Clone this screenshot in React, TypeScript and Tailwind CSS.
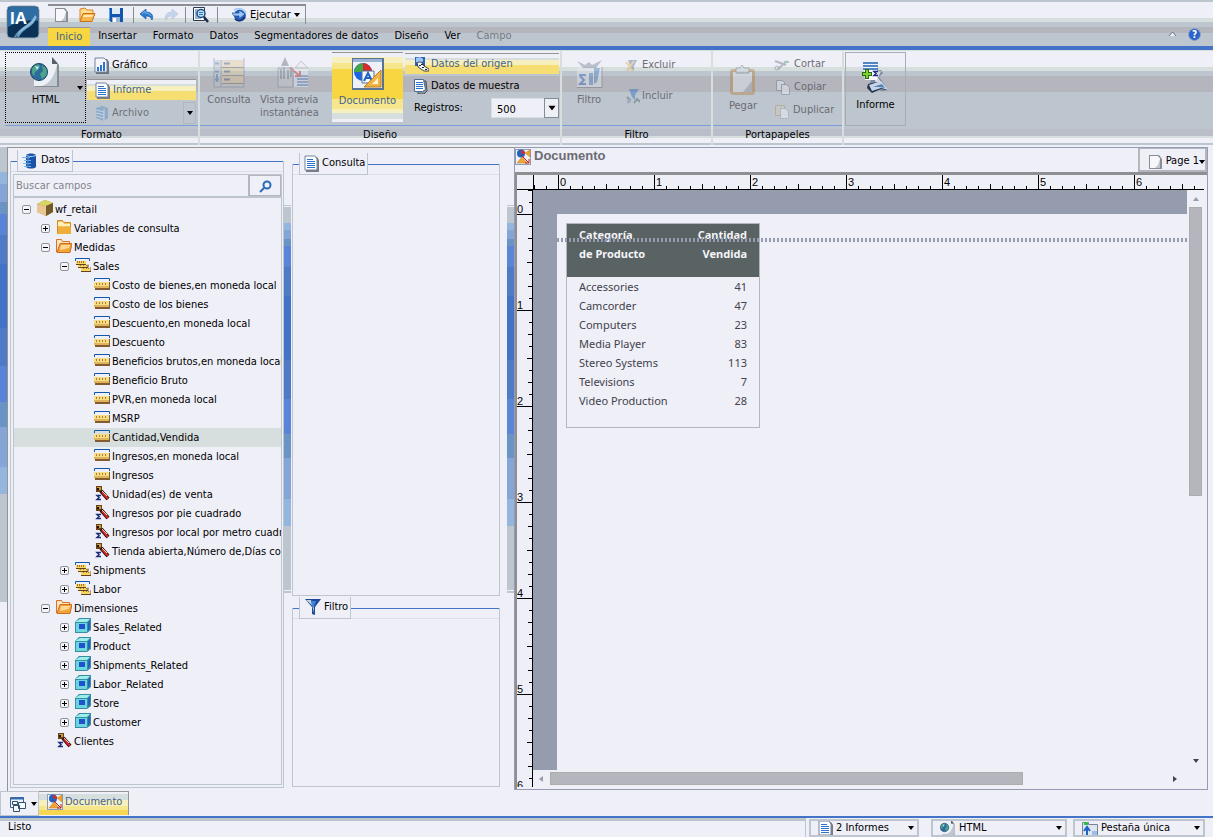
import type { ReactNode } from 'react';

/* ---------- small shared drawings ---------- */

function Arrow({ className = '' }: { className?: string }) {
  return (
    <svg width="6" height="4" viewBox="0 0 6 4" className={className} fill="currentColor" aria-hidden="true">
      <path d="M0 0h6L3 4z" />
    </svg>
  );
}

function Icon({ w = 16, h = 16, box, faded = false, children }: { w?: number; h?: number; box?: string; faded?: boolean; children: ReactNode }) {
  return (
    <svg width={w} height={h} viewBox={box ?? `0 0 ${w} ${h}`} fill="none" aria-hidden="true" className={faded ? 'shrink-0 opacity-40' : 'shrink-0'}>
      {children}
    </svg>
  );
}

const PageIcon = () => (
  <Icon>
    <path d="M2 1h10l3 4v10H2z" fill="#8c8c8c" />
    <path d="M2.5 1.5h8.5l2.5 3v10h-11z" fill="#f7f7fb" stroke="#8c8c94" />
    <path d="M13 5v9H8l3-3z" fill="#bdc6ce" />
  </Icon>
);

const OpenIcon = () => (
  <Icon w={17}>
    <path d="M1 14V2l5-1 2 2h6v4" fill="#ffdc8c" stroke="#d6842b" />
    <path d="M1 14.500l3-8h12l-3 8z" fill="#f7b54a" stroke="#c67318" />
    <path d="M5 8h9l-1 2H4z" fill="#ffe7b5" />
  </Icon>
);

const SaveIcon = () => (
  <Icon>
    <path d="M1 1h14v14H3l-2-2z" fill="#1057ad" />
    <path d="M4 1h8v6H4z" fill="#dfe9f7" />
    <path d="M4 10h8v5H4z" fill="#9cb5d6" />
    <path d="M5 11h3v4H5z" fill="#fff" />
    <path d="M1.500 1.500v11" stroke="#5aa5ef" />
  </Icon>
);

const UndoIcon = () => (
  <Icon w={14} h={12}>
    <path d="M6 0v3c5 0 8 3 6 8-1-3-3-4-6-4v3L0 5z" fill="#2b7bce" stroke="#1852a5" strokeWidth=".7" />
    <path d="M2 5l3-3v2c3 0 5 1 6 3" stroke="#6bb5ef" />
  </Icon>
);

const RedoIcon = () => (
  <Icon w={14} h={12} faded>
    <path d="M8 0v3C3 3 0 6 2 11c1-3 3-4 6-4v3l6-5z" fill="#84add6" stroke="#6b94c6" strokeWidth=".7" />
  </Icon>
);

const PreviewIcon = () => (
  <Icon w={17} h={17}>
    <path d="M1.500.5h11v13h-11z" fill="#fff" stroke="#26394f" />
    <path d="M3 3h3M3 5h2M3 7h2M3 9h3M3 11h6" stroke="#316bb5" />
    <circle cx="9" cy="6.500" r="4" fill="#bde7ff" stroke="#214a84" strokeWidth="1.500" />
    <path d="M7 5.500h4M7 7.500h4" stroke="#316bb5" />
    <path d="M12 10l4 5" stroke="#1c2c47" strokeWidth="2.500" />
  </Icon>
);

const RunIcon = () => (
  <Icon w={15} h={14}>
    <circle cx="8" cy="7.500" r="6" fill="#2463bd" />
    <path d="M2 2c4-2 9-2 12 3" stroke="#a5cef7" strokeWidth="2" />
    <path d="M0 5h7V2l6 4-6 5V8H2z" fill="#9cc6f7" stroke="#1c4a94" strokeWidth=".7" />
    <path d="M3 11c3 3 7 2 10-2" stroke="#182f6b" strokeWidth="1.500" />
  </Icon>
);

const Logo = () => (
  <svg width="34" height="34" viewBox="0 0 34 34" aria-hidden="true">
    <rect x="1" y="1" width="32" height="32" rx="4" fill="#0c3156" stroke="#93a9bd" />
    <path d="M2 5q0-3 3-3h24q3 0 3 3v11Q18 13 2 22z" fill="#2d6da3" />
    <path d="M11 32c3-13 14-11 16-19l3-2c0 11-12 11-17 21z" fill="#5f9cc9" />
    <path d="M8 32c4-9 16-11 21-22l2 2C27 22 16 23 10 32z" fill="#a9cde6" opacity=".6" />
    <text x="4" y="19" fill="#fff" fontFamily="Liberation Sans, sans-serif" fontWeight="bold" fontSize="17">IA</text>
  </svg>
);

const GlobePage = ({ size = 32 }: { size?: number }) => (
  <Icon w={size} h={size} box="0 0 32 32">
    <path d="M5 1h18l6 7v22H5z" fill="#848c94" />
    <path d="M4 0h18v7h5v22H4z" fill="#eef0f7" />
    <path d="M27 8v21H12c8-3 12-9 15-21z" fill="#bfc8d1" />
    <path d="M22 0l6 7h-6z" fill="#56616b" />
    <circle cx="9" cy="15" r="8.500" fill="#2d6b9c" />
    <path d="M3 10c3-4 6-3 7-1l-2 4-3 2-1 4c-3-3-2-7-1-9zM12 8l5 4v6l-5 4-2-5 3-3z" fill="#4aa58c" />
    <path d="M5 9l4 1-2 3z" fill="#bfeaf0" />
    <circle cx="9" cy="15" r="8.500" stroke="#1c4263" />
  </Icon>
);

const ChartIcon = () => (
  <Icon w={15} h={17}>
    <path d="M2 2h11l2 3v12H2z" fill="#6b737b" />
    <path d="M1 1h9l3 3v11H1z" fill="#f4f6fb" stroke="#73849c" />
    <path d="M3 10h2v4H3zM6 8h2v6H6zM9 5h2v9H9z" fill="#2b73ce" />
  </Icon>
);

const ReportIcon = () => (
  <Icon w={15} h={17}>
    <path d="M2 2h11l2 3v12H2z" fill="#7b7b84" />
    <path d="M1 1h10l2 3v11H1z" fill="#fff" stroke="#73849c" />
    <path d="M3 4.500h6M3 6.500h8M3 8.500h8M3 10.500h8M3 12.500h8" stroke="#2b73ce" />
  </Icon>
);

const ArchiveIcon = () => (
  <Icon w={15} h={16} faded>
    <path d="M2 3l6-2 6 2v10l-4 3-8-3z" fill="#4a84c6" />
    <path d="M10 4v12M2 5l8 2M2 8l8 2M2 11l8 2" stroke="#dfe9f7" />
  </Icon>
);

const QueryIcon = () => (
  <Icon w={34} h={32} faded>
    <path d="M2 3h30v27H2z" fill="#b9bfc7" />
    <path d="M2 1v29h30V1M9 3v27" stroke="#6b7b8c" />
    <path d="M10 6.500h21M10 14.500h21M10 22.500h21" stroke="#e5c58c" strokeWidth="6" />
    <path d="M10 10.500h22M10 18.500h22M10 26.500h22" stroke="#6b5a39" />
    <path d="M12 6.500h6M12 14.500h6M12 22.500h6" stroke="#314a6b" strokeWidth="2" />
    <path d="M3 6.500h4M3 14.500h4M3 22.500h4M5 17v8" stroke="#316bb5" strokeWidth="2" />
  </Icon>
);

const LivePreviewIcon = () => (
  <Icon w={34} h={32} faded>
    <path d="M2 11h15v19H2z" fill="#c5cbd2" stroke="#6b7b8c" />
    <path d="M9 0l4 9H5z" fill="#5a636b" />
    <path d="M5 12v10M8 10v12M12 13v9M15 10v10" stroke="#6b7b8c" strokeWidth="2" />
    <path d="M18 10h14v20H18z" fill="#f2f4fa" />
    <path d="M21 19h11M21 22h11M21 25h11M21 28h11" stroke="#2463bd" strokeWidth="1.500" />
    <path d="M14 11l10 8m0-5v5h-5" stroke="#c63131" strokeWidth="2" />
    <path d="M19 11l6-7 7 7z" fill="#e7eaf0" stroke="#848c94" />
  </Icon>
);

const DocumentIcon = () => (
  <Icon w={32} h={32}>
    <path d="M0 0h32v32H0z" fill="#5a7394" />
    <path d="M1 4h29v26H1z" fill="#eef1f7" />
    <path d="M1 1h29v3H1z" fill="#9cb5d6" />
    <circle cx="11" cy="14" r="9" fill="#1c63e6" />
    <path d="M11 14V5a9 9 0 0 1 9 9z" fill="#d62b2b" />
    <path d="M11 14H2a9 9 0 0 1 9-9z" fill="#42a54a" />
    <path d="M10 13h12v12H10z" fill="#f7f9fc" stroke="#5a7394" />
    <path d="M12 23l4-8 4 8M13.500 20h5" stroke="#1c63c6" strokeWidth="2" />
    <path d="M29 12v17H12z" fill="#f0b542" stroke="#bd7b18" />
    <path d="M26 20v6h-6z" fill="#fff5d6" />
  </Icon>
);

const SourceIcon = () => (
  <Icon>
    <path d="M2 1h10v9H2z" fill="#2b63b5" />
    <path d="M3 2c4-2 8 0 7 3L7 8 3 6z" fill="#9cc6f7" />
    <path d="M4 7c3-2 5-1 7 3l5 3v2h-5l-6-4z" fill="#f4f6fb" stroke="#18212b" strokeWidth=".8" />
    <path d="M6 9h2v1H6zM9 11h2v1H9zM12 13h2v1h-2zM8 8h2v1H8z" fill="#18212b" />
  </Icon>
);

const SampleIcon = () => (
  <Icon w={14} h={15}>
    <path d="M4 2h8l1 10-3 3H4z" fill="#8c949c" stroke="#4a525a" />
    <path d="M.5.5h9l2 10-3 2h-8z" fill="#fff" stroke="#4a6b94" />
    <path d="M2 3.500h7M2 5.500h7M2 7.500h7M2 9.500h7" stroke="#2b73ce" />
  </Icon>
);

const BigFilterIcon = () => (
  <Icon w={27} h={30} faded>
    <path d="M1 7h25v21H1z" fill="#eceff5" />
    <path d="M1 28.500h25V8" stroke="#5a6b7b" />
    <path d="M1 2l6 7h13l6-8-10 5-3-3-4 3z" fill="#6b7b8c" />
    <path d="M3 16h7M4 17l4 4-4 4h6" stroke="#1c63c6" strokeWidth="2" />
    <path d="M13 14h4v12h-4zM18 9h6l-3 14-3 2z" fill="#4a84c6" />
  </Icon>
);

const ExcludeIcon = () => (
  <Icon w={13} h={14} faded>
    <path d="M3 2h9L9 8v5L6 10z" fill="#4a6b94" />
    <path d="M1 4l7 9M9 3L2 13" stroke="#e7a531" strokeWidth="2" />
  </Icon>
);

const IncludeIcon = () => (
  <Icon w={15} h={17} faded>
    <path d="M4 1h10l-4 6v5L7 9z" fill="#1c63c6" />
    <path d="M2 9l3 3-2 3M9 15l3-4 3 3" stroke="#42525f" strokeWidth="2" />
    <circle cx="4" cy="13" r="2" fill="#73849c" />
  </Icon>
);

const PasteIcon = () => (
  <Icon w={28} h={32} faded>
    <rect x="1" y="5" width="25" height="26" rx="3" fill="#b57b31" />
    <path d="M4 8h19v20H4z" fill="#eef1f7" />
    <path d="M23 17v11H14z" fill="#9ca5b5" />
    <path d="M7 4h4l2-3 2 3h5v5H7z" fill="#d6d9df" stroke="#5a636b" />
  </Icon>
);

const CutIcon = () => (
  <Icon w={16} h={12} faded>
    <path d="M1 2l11 4M4 10l9-8" stroke="#5a6b7b" strokeWidth="2" />
    <circle cx="3" cy="9" r="2" stroke="#5a6b7b" />
    <path d="M10 3h5" stroke="#42946b" strokeWidth="2" />
  </Icon>
);

const CopyIcon = () => (
  <Icon w={14} h={15} faded>
    <path d="M.5.5h6l2 2v8h-8z" fill="#f7f9fc" stroke="#5a7394" />
    <path d="M5.500 4.500h5l3 3v7h-8z" fill="#f7f9fc" stroke="#5a7394" />
  </Icon>
);

const DuplicateIcon = () => (
  <Icon w={15} h={16} faded>
    <path d="M1.500 2.500h9v10h-9z" fill="#d6c6ad" stroke="#a58c63" />
    <path d="M6.500 5.500h5l3 3v7h-8z" fill="#f7f9fc" stroke="#73849c" strokeDasharray="2 1" />
  </Icon>
);

const NewReportIcon = () => (
  <Icon w={30} h={32}>
    <path d="M12 9l8-1 2 3-4 4 10 13-7 1-13-4z" fill="#7b8ca3" />
    <path d="M14 10l6-1-3 7 7 9-10-5z" fill="#d3dae6" />
    <path d="M7 22l9-2 10 8-6-1-9 4-5-5z" fill="#20344f" />
    <path d="M8 23l12-4 8 9-8-2-9 3z" fill="#c9d5e6" />
    <path d="M12 25l9-3 3 4-6-1z" fill="#5a82b5" />
    <path d="M2 4h14v14H4z" fill="#f7f9fc" />
    <path d="M2 1h15M2 4h15M2 7h15" stroke="#1c63b5" strokeWidth="1.500" />
    <path d="M6 7v10M1 12h10" stroke="#2b6b18" strokeWidth="4" />
    <path d="M6 8v8M2 12h8" stroke="#7bd62b" strokeWidth="2" />
    <path d="M17 9.500h-4l2 2-2 2h4" stroke="#1c2c7b" strokeWidth="1.500" />
  </Icon>
);

const DatabaseIcon = () => (
  <Icon>
    <path d="M4 2c2-2 8-2 10 0v12c-2 2-8 2-10 0z" fill="#1c52a5" />
    <path d="M0 4.500h8M2 7.500h7M1 10.500h8M2 13.500h7" stroke="#73b5ef" />
    <path d="M4 2c2 2 8 2 10 0" stroke="#a5d6ff" />
    <path d="M6 4v10" stroke="#4a8cd6" strokeWidth="2" opacity=".6" />
  </Icon>
);

const FunnelIcon = () => (
  <Icon w={17}>
    <path d="M1 0h16l-6 8v8l-3-1V8z" fill="#1c4a94" />
    <path d="M2 1h5l3 13V8z" fill="#c6cfdc" />
    <path d="M7 2h5l-3 8z" fill="#3b84d6" />
  </Icon>
);

const SearchIcon = () => (
  <Icon w={13} h={13}>
    <circle cx="8" cy="5" r="3.500" stroke="#2b6bb5" strokeWidth="2" fill="#eaf3ff" />
    <path d="M5 8l-4 4" stroke="#2b6bb5" strokeWidth="2" />
  </Icon>
);

const DocSmallIcon = () => (
  <Icon>
    <path d="M0 0h16v16H0z" fill="#8c9cb5" />
    <path d="M1 1h14v14H1z" fill="#eef1f7" />
    <circle cx="6" cy="4.500" r="4" fill="#1c63c6" />
    <path d="M6 4.500V1a4 4 0 0 1 4 4z" fill="#d62b2b" />
    <path d="M10 4l5-3v7zM2 14l5-6 5 6z" fill="#f0a531" stroke="#bd7b18" strokeWidth=".5" />
    <path d="M6 6l8 8m0-4v4h-4" stroke="#c61818" />
  </Icon>
);

const WindowsIcon = () => (
  <Icon>
    <path d="M.5 1.500h13v10H.5z" fill="#eef1f7" stroke="#42638c" />
    <path d="M1 2.500h13" stroke="#316bb5" strokeWidth="2" />
    <path d="M8.500 6.500h7v6h-7zM3.500 9.500h6v6h-6zM2.500 5.500h5v3h-5z" fill="#f7f9fc" stroke="#31526b" />
  </Icon>
);

const TabTreeIcon = () => (
  <Icon>
    <path d="M.5 2.500h6v2h9v11H.5z" fill="#e0e6ef" stroke="#73849c" />
    <path d="M2 2h4v3H2z" fill="#31bd4a" />
    <path d="M5 7v9M2 11l3-4 3 4" stroke="#1c63c6" strokeWidth="2" />
    <path d="M10 11h5v4h-5z" fill="#9cbde7" />
  </Icon>
);

/* ---------- tree ---------- */

type Kind = 'root' | 'folder' | 'open' | 'group' | 'measure' | 'calc' | 'dim';
type Node = { level: number; kind: Kind; label: string; state?: '+' | '-'; selected?: boolean };

const nodes: Node[] = [
  { level: 0, kind: 'root', label: 'wf_retail', state: '-' },
  { level: 1, kind: 'folder', label: 'Variables de consulta', state: '+' },
  { level: 1, kind: 'open', label: 'Medidas', state: '-' },
  { level: 2, kind: 'group', label: 'Sales', state: '-' },
  { level: 3, kind: 'measure', label: 'Costo de bienes,en moneda local' },
  { level: 3, kind: 'measure', label: 'Costo de los bienes' },
  { level: 3, kind: 'measure', label: 'Descuento,en moneda local' },
  { level: 3, kind: 'measure', label: 'Descuento' },
  { level: 3, kind: 'measure', label: 'Beneficios brutos,en moneda local' },
  { level: 3, kind: 'measure', label: 'Beneficio Bruto' },
  { level: 3, kind: 'measure', label: 'PVR,en moneda local' },
  { level: 3, kind: 'measure', label: 'MSRP' },
  { level: 3, kind: 'measure', label: 'Cantidad,Vendida', selected: true },
  { level: 3, kind: 'measure', label: 'Ingresos,en moneda local' },
  { level: 3, kind: 'measure', label: 'Ingresos' },
  { level: 3, kind: 'calc', label: 'Unidad(es) de venta' },
  { level: 3, kind: 'calc', label: 'Ingresos por pie cuadrado' },
  { level: 3, kind: 'calc', label: 'Ingresos por local por metro cuadrado' },
  { level: 3, kind: 'calc', label: 'Tienda abierta,Número de,Días comercial' },
  { level: 2, kind: 'group', label: 'Shipments', state: '+' },
  { level: 2, kind: 'group', label: 'Labor', state: '+' },
  { level: 1, kind: 'open', label: 'Dimensiones', state: '-' },
  { level: 2, kind: 'dim', label: 'Sales_Related', state: '+' },
  { level: 2, kind: 'dim', label: 'Product', state: '+' },
  { level: 2, kind: 'dim', label: 'Shipments_Related', state: '+' },
  { level: 2, kind: 'dim', label: 'Labor_Related', state: '+' },
  { level: 2, kind: 'dim', label: 'Store', state: '+' },
  { level: 2, kind: 'dim', label: 'Customer', state: '+' },
  { level: 1, kind: 'calc', label: 'Clientes' },
];

const indent = ['pl-[8px]', 'pl-[27px]', 'pl-[46px]', 'pl-[65px]'];

function TreeIcon({ kind }: { kind: Kind }) {
  switch (kind) {
    case 'root':
      return (
        <Icon>
          <path d="M0 4l8-4 8 3v9l-7 4-9-4z" fill="#b5843b" />
          <path d="M0 4l8-4 8 3-7 3z" fill="#d6d663" />
          <path d="M0 4l9 2v10l-9-4z" fill="#e7c694" />
          <path d="M9 6l7-3v9l-7 4z" fill="#735a29" />
        </Icon>
      );
    case 'folder':
      return (
        <Icon>
          <path d="M1.500 14.500v-13h5l1 2h7v11z" fill="#f7c652" stroke="#ce8c29" />
          <path d="M2 3h5l1 2h6v2H2z" fill="#ffefbd" />
          <path d="M2 7c5 3 9-1 13 1v7H2z" fill="#efad39" />
        </Icon>
      );
    case 'open':
      return (
        <Icon>
          <path d="M.5 14V1.500h5l1 2h7V6" fill="#ffe7bd" stroke="#d6732b" />
          <path d="M1 14.500l3-9h12l-2 9z" fill="#efa539" stroke="#ce6b21" />
          <path d="M5 7h9l-1 3-9 2z" fill="#ffd694" />
        </Icon>
      );
    case 'group':
      return (
        <Icon>
          <path d="M.5 4V1.500h14V4" stroke="#1057ad" />
          <path d="M1 4h10v4H1zM3 8h10v3H3zM6 11h9v3H6z" fill="#f7d663" />
          <path d="M1 7.500h10M3 10.500h10v-3M6 14.500h10V10" stroke="#63421c" />
          <path d="M2.500 4v2M4.500 4v2M6.500 4v2M8.500 4v2M5.500 8v1M8.500 8v1M11.500 8v1M8.500 11v1M11.500 11v1M13.500 11v1" stroke="#a5732b" />
        </Icon>
      );
    case 'measure':
      return (
        <Icon>
          <path d="M.5 5V2.500h15V5" stroke="#1057ad" />
          <path d="M1 6h15v8H1z" fill="#845a31" />
          <path d="M0 6h15v6H0z" fill="#f7de84" />
          <path d="M0 10h15v2H0z" fill="#deb55a" />
          <path d="M2.500 7v2M5.500 7v2M8.500 7v2M11.500 7v2" stroke="#ad7b39" />
        </Icon>
      );
    case 'calc':
      return (
        <Icon>
          <path d="M2 1h6v6H2z" fill="#6b4210" />
          <path d="M3 2h4v3H3z" fill="#c69c4a" />
          <path d="M3 3h2v2H3z" fill="#18140c" />
          <path d="M7 6l7 8" stroke="#2b1010" strokeWidth="4" />
          <path d="M8 7l6 7" stroke="#d62b29" strokeWidth="2" />
          <path d="M8 6l5 5" stroke="#f2cdb0" />
          <path d="M7 10.500H3l2 2-2 2h4" stroke="#1c2c7b" strokeWidth="1.500" />
        </Icon>
      );
    case 'dim':
      return (
        <Icon>
          <path d="M0 4l4-4h12v12l-4 3H0z" fill="#398ca5" />
          <path d="M0 4l5-3h10l-3 3z" fill="#9cefe7" />
          <path d="M1 5h11v9H1z" fill="#6bd6de" />
          <path d="M4 6h6v5H4z" fill="#2152ce" />
          <path d="M13 5l2-3v8l-2 3z" fill="#2163bd" />
        </Icon>
      );
  }
}

function Tree() {
  return (
    <ul className="flex-1 overflow-hidden pt-[2px]">
      {nodes.map((n) => (
        <li key={n.label} className={`flex h-[19px] items-start whitespace-nowrap ${indent[n.level]} ${n.selected ? 'bg-[#d6dede]' : ''}`}>
          {n.state ? (
            <button type="button" aria-label={n.label} className="mt-[5px] mr-[6px] flex h-[9px] w-[9px] shrink-0 items-center justify-center rounded-[2px] border border-[#8c949c] bg-[#f4f4f8]">
              <svg width="5" height="5" viewBox="0 0 5 5" stroke="#000" shapeRendering="crispEdges" aria-hidden="true">
                <path d={n.state === '+' ? 'M0 2.500h5M2.500 0v5' : 'M0 2.500h5'} />
              </svg>
            </button>
          ) : (
            <span className="w-[15px] shrink-0" />
          )}
          <TreeIcon kind={n.kind} />
          <span className="pl-[2px] leading-[20px]">{n.label}</span>
        </li>
      ))}
    </ul>
  );
}

/* ---------- ribbon ---------- */

const selectedRow = 'bg-[linear-gradient(#efeff8_0_4px,#d6dede_4px_6px,#f7efbd_6px_11px,#f7de73_11px_100%)] text-[#42638c] border-t border-[#949494]';

function Group({ title, className = '', children }: { title: string; className?: string; children: ReactNode }) {
  return (
    <section className={`flex flex-col border-r-2 border-[#d6dede] ${className}`} aria-label={title}>
      <div className="flex h-[76px] border-b border-[#7b9cd6] pt-[2px]">{children}</div>
      <h2 className="pt-px text-center leading-[15px]">{title}</h2>
    </section>
  );
}

const tabs = ['Insertar', 'Formato', 'Datos', 'Segmentadores de datos', 'Diseño', 'Ver'];

function Header() {
  return (
    <header className="flex h-[50px] shrink-0 border-b-4 border-[#4273c6] bg-[linear-gradient(#bdc6ce_0_2px,#efeff8_2px_18px,#d6dede_18px_22px,#bdc6ce_22px_27px,#b5b5bd_27px_33px,#bdc6ce_33px_100%)]">
      <button type="button" aria-label="InfoAssist" className="ml-[6px] mt-[5px] h-[34px] w-[34px]">
        <Logo />
      </button>
      <div className="flex flex-1 flex-col pl-[8px]">
        <div className="mt-[4px] flex h-[20px] w-[258px] items-center border-t-2 border-r border-[#8c8c94] pl-[5px]">
          <button type="button" aria-label="Nuevo"><PageIcon /></button>
          <button type="button" aria-label="Abrir" className="ml-[10px]"><OpenIcon /></button>
          <button type="button" aria-label="Guardar" className="ml-[12px]"><SaveIcon /></button>
          <span className="ml-[9px] h-[16px] w-px bg-[#848c94]" />
          <button type="button" aria-label="Deshacer" className="ml-[6px]"><UndoIcon /></button>
          <button type="button" aria-label="Rehacer" className="ml-[10px]"><RedoIcon /></button>
          <span className="ml-[7px] h-[16px] w-px bg-[#848c94]" />
          <button type="button" aria-label="Vista" className="ml-[6px]"><PreviewIcon /></button>
          <span className="ml-[8px] h-[16px] w-px bg-[#848c94]" />
          <button type="button" className="ml-[14px] flex items-center gap-[3px]"><RunIcon />Ejecutar</button>
          <button type="button" aria-label="Más opciones de ejecución" className="ml-auto pr-[5px]"><Arrow /></button>
        </div>
        <nav className="mt-[2px] flex h-[20px] items-center whitespace-nowrap pt-px">
          <a href="#inicio" className="flex h-full items-center border-t border-[#949494] bg-[#f7d642] px-[8px] text-[#42638c]">Inicio</a>
          {tabs.map((t) => (
            <a key={t} href="#tab" className="px-[8px]">{t}</a>
          ))}
          <a href="#campo" className="px-[8px] text-[#737b84]">Campo</a>
        </nav>
      </div>
      <div className="flex items-center gap-[11px] pr-[12px] pt-[22px]">
        <button type="button" aria-label="Contraer cinta">
          <Icon w={9} h={6}><path d="M1 5l3.500-4L8 5" fill="#efeff8" stroke="#6b737b" /></Icon>
        </button>
        <button type="button" aria-label="Ayuda">
          <Icon w={13} h={13}>
            <circle cx="6.500" cy="6.500" r="6" fill="#2b63c6" stroke="#8ca5d6" />
            <text x="6.500" y="10" textAnchor="middle" fontSize="10" fontWeight="bold" fill="#fff">?</text>
          </Icon>
        </button>
      </div>
    </header>
  );
}

const bigButton = 'flex flex-col items-center leading-[13px]';

function Ribbon() {
  return (
    <div className="flex h-[95px] shrink-0 whitespace-nowrap bg-[linear-gradient(#d6dede_0_1px,#efeff8_1px_17px,#d6dede_17px_21px,#bdc6ce_21px_26px,#b5b5bd_26px_42px,#bdc6ce_42px_79px,#b9bec8_79px_86px,#d6dede_86px_88px,#efeff8_88px_93px,#bdc6ce_93px_95px)] pl-[5px]">
      <Group title="Formato" className="w-[195px]">
        <button type="button" className={`${bigButton} relative h-[71px] w-[81px] border border-dotted border-black pt-[4px]`}>
          <GlobePage />
          <span className="pt-[4px]">HTML</span>
          <Arrow className="absolute right-[2px] top-[33px]" />
        </button>
        <div className="flex flex-1 flex-col pl-px pr-[2px] pt-px">
          <button type="button" className="flex h-[24px] items-center gap-[3px] pl-[7px]"><ChartIcon />Gráfico</button>
          <button type="button" className={`mt-[2px] flex h-[21px] items-center gap-[3px] pl-[8px] ${selectedRow}`}><ReportIcon />Informe</button>
          <div className="mt-[2px] flex h-[22px] items-center text-[#6b737b]">
            <button type="button" disabled className="flex flex-1 items-center gap-[3px] pl-[7px]"><ArchiveIcon />Archivo</button>
            <button type="button" aria-label="Tipos de archivo" className="flex h-full w-[13px] items-center justify-center border border-[#b5b5bd] text-black"><Arrow /></button>
          </div>
        </div>
      </Group>

      <Group title="Diseño" className="w-[362px]">
        <button type="button" disabled className={`${bigButton} w-[58px] pt-[5px] text-[#6b6b73]`}><QueryIcon /><span className="pt-[4px]">Consulta</span></button>
        <button type="button" disabled className={`${bigButton} w-[70px] pt-[5px] text-[#6b6b73]`}><LivePreviewIcon /><span className="whitespace-normal pl-[2px] pt-[4px] text-left">Vista previa instantánea</span></button>
        <button type="button" className={`${bigButton} ml-[4px] h-[70px] w-[71px] border-t border-[#949494] bg-[linear-gradient(#efeff8_0_4px,#f7efbd_4px_10px,#f7e78c_10px_16px,#f7d642_16px_46px,#f7e78c_46px_56px,#f7efbd_56px_60px,#d6dede_60px_66px,#efeff8_66px_100%)] pt-[5px] text-[#42638c]`}>
          <DocumentIcon /><span className="pt-[4px]">Documento</span>
        </button>
        <div className="ml-[2px] flex flex-1 flex-col pr-px pt-px">
          <button type="button" className={`flex h-[21px] items-center gap-[2px] pl-[8px] ${selectedRow}`}><SourceIcon />Datos del origen</button>
          <button type="button" className="flex h-[24px] items-center gap-[3px] pl-[9px]"><SampleIcon />Datos de muestra</button>
          <div className="flex h-[20px] items-center pl-[9px]">
            <label htmlFor="registros" className="flex-1">Registros:</label>
            <div className="relative flex h-[20px] w-[68px] items-center bg-[#efeff8]">
              <select id="registros" className="h-full w-full appearance-none border border-[#d6dede] pt-[3px] pl-[5px] outline-none"><option>500</option></select>
              <span className="pointer-events-none absolute inset-y-0 right-0 flex w-[15px] items-center justify-center border border-[#848c94]"><Arrow className="scale-125" /></span>
            </div>
          </div>
        </div>
      </Group>

      <Group title="Filtro" className="w-[151px]">
        <button type="button" disabled className={`${bigButton} w-[54px] pt-[7px] text-[#6b6b73]`}><BigFilterIcon /><span className="pt-[4px]">Filtro</span></button>
        <div className="flex flex-col pl-[9px] pt-px text-[#6b6b73]">
          <button type="button" disabled className="flex h-[24px] items-center gap-[4px]"><ExcludeIcon />Excluir</button>
          <button type="button" disabled className="mt-[7px] flex h-[24px] items-center gap-[2px]"><IncludeIcon />Incluir</button>
        </div>
      </Group>

      <Group title="Portapapeles" className="w-[131px]">
        <button type="button" disabled className={`${bigButton} w-[60px] pt-[12px] text-[#6b6b73]`}><PasteIcon /><span className="pt-[3px]">Pegar</span></button>
        <div className="flex flex-col pl-px pt-px text-[#6b6b73]">
          <button type="button" disabled className="flex h-[23px] items-center gap-[4px]"><CutIcon />Cortar</button>
          <button type="button" disabled className="flex h-[23px] items-center gap-[4px] pl-[2px]"><CopyIcon />Copiar</button>
          <button type="button" disabled className="flex h-[23px] items-center gap-[4px]"><DuplicateIcon />Duplicar</button>
        </div>
      </Group>

      <button type="button" className={`${bigButton} ml-px mt-[2px] h-[74px] w-[61px] border border-[#a5adb5] pt-[9px]`}>
        <NewReportIcon /><span className="pt-[4px]">Informe</span>
      </button>
    </div>
  );
}

/* ---------- panels ---------- */

function Panel({ title, icon, className = '', children }: { title: string; icon: ReactNode; className?: string; children?: ReactNode }) {
  return (
    <section className={`relative flex flex-col border border-t-0 border-[#bdc6ce] ${className}`}>
      <div className="flex h-[11px] border-t border-b border-t-[#4273c6] border-b-[#dcdfe8]">
        <h2 className="relative -top-[12px] ml-[6px] flex h-[22px] items-center gap-[3px] border border-t-0 border-[#bdc6ce] bg-[#efeff8] pl-[4px] pr-[2px]">
          {icon}
          {title}
        </h2>
      </div>
      {children}
    </section>
  );
}

function Gutter() {
  return (
    <div className="mt-[57px] h-[388px] w-[7px] shrink-0 border-t border-[#bdc6ce] bg-[linear-gradient(#efeff8_0_1px,#bdc6ce_1px_17px,#94b5de_17px_24px,#84a5d6_24px_33px,#6b94c6_33px_40px,#5a84d6_40px_61px,#4f7bc6_61px_90px,#4273c6_90px_154px,#4f7bc6_154px_193px,#5a84d6_193px_228px,#6b94c6_228px_252px,#84a5d6_252px_293px,#94b5de_293px_320px,#bdc6ce_320px_384px,#efeff8_384px_385px,#bdc6ce_385px_100%)]" />
  );
}

/* ---------- document ---------- */

const rows: [string, number][] = [
  ['Accessories', 41],
  ['Camcorder', 47],
  ['Computers', 23],
  ['Media Player', 83],
  ['Stereo Systems', 113],
  ['Televisions', 7],
  ['Video Production', 28],
];

const inches = [0, 1, 2, 3, 4, 5, 6];
const eighths = [1, 2, 3, 4, 5, 6, 7];

function TopRuler() {
  return (
    <div className="flex h-[15px] shrink-0 overflow-hidden border-b border-black pl-[16px] font-['Liberation_Sans',Arial,sans-serif]">
      <svg width="25" height="14" viewBox="0 0 25 14" stroke="#000" shapeRendering="crispEdges" className="shrink-0" aria-hidden="true">
        <path d="M.5 0v14M1.500 10v4M13.500 11v3" />
      </svg>
      {inches.map((n) => (
        <div key={n} className="relative w-[96px] shrink-0">
          <svg width="96" height="14" viewBox="0 0 96 14" stroke="#000" shapeRendering="crispEdges" aria-hidden="true">
            <path d="M.5 0v14" />
            {eighths.map((e) => (
              <path key={e} d={`M${e * 12 + 0.5} ${e === 4 ? 9 : 11}V14`} />
            ))}
          </svg>
          <span className="absolute top-0 left-[2px] text-[11px] leading-[14px]">{n}</span>
        </div>
      ))}
    </div>
  );
}

function SideRuler() {
  return (
    <div className="flex w-[16px] shrink-0 flex-col overflow-hidden border-r border-black font-['Liberation_Sans',Arial,sans-serif]">
      <div className="relative h-[24px] shrink-0">
        <svg width="15" height="24" viewBox="0 0 15 24" stroke="#000" shapeRendering="crispEdges" aria-hidden="true">
          <path d="M11 .5h4M12 12.500h3" />
        </svg>
        <span className="absolute bottom-0 left-0 text-[11px] leading-[9px]">0</span>
      </div>
      {inches.map((n) => (
        <div key={n} className="relative h-[96px] shrink-0">
          <svg width="15" height="96" viewBox="0 0 15 96" stroke="#000" shapeRendering="crispEdges" aria-hidden="true">
            <path d="M0 .5h15" />
            {eighths.map((e) => (
              <path key={e} d={`M${e === 4 ? 10 : e % 2 ? 12 : 11} ${e * 12 + 0.5}H15`} />
            ))}
          </svg>
          <span className="absolute bottom-0 left-0 text-[11px] leading-[9px]">{n + 1}</span>
        </div>
      ))}
    </div>
  );
}

function ReportTable() {
  return (
    <div className="h-[205px] w-[194px] border border-[#b5b5bd] font-['Noto_Sans',sans-serif]">
      <table className="w-full text-[11px] leading-[19px] text-[#42424a]">
        <thead className="bg-[#5a6363] font-bold text-[#f4f4fa]">
          <tr className="h-[53px] align-top">
            <th scope="col" className="pt-px pl-[12px] text-left">Categoría<br />de Producto</th>
            <th scope="col" className="pt-px pr-[12px] text-right">Cantidad<br />Vendida</th>
          </tr>
        </thead>
        <tbody>
          {rows.map(([name, qty]) => (
            <tr key={name}>
              <td className="pl-[12px]">{name}</td>
              <td className="pr-[12px] text-right">{qty}</td>
            </tr>
          ))}
        </tbody>
      </table>
    </div>
  );
}

function DocumentPane() {
  return (
    <main className="mt-[2px] mr-[5px] mb-px flex min-w-0 flex-1 flex-col border border-[#949cb5]">
      <div className="flex h-[24px] shrink-0 items-stretch">
        <h1 className="flex items-start gap-[3px] pt-px font-['Liberation_Sans',Arial,sans-serif] text-[13px] leading-[14px] font-bold text-[#6b6b73]">
          <DocSmallIcon />
          Documento
        </h1>
        <button type="button" className="ml-auto flex items-center gap-[2px] border-2 border-t border-[#b5b5bd] pt-[4px] pl-[7px]">
          <PageIcon />
          <span className="flex items-center pl-px">Page 1<Arrow /></span>
        </button>
      </div>
      <div className="flex min-h-0 flex-1 flex-col border-t-[3px] border-l-2 border-[#8f8f91] pr-[3px] pb-[2px]">
        <TopRuler />
        <div className="flex min-h-0 flex-1">
          <SideRuler />
          <div className="flex min-w-0 flex-1 flex-col">
            <div className="flex min-h-0 flex-1">
              <div className="min-w-0 flex-1 bg-[#949cad] pt-[24px] pl-[24px]">
                <div className="relative h-full bg-[#efeff8] pt-[9px] pl-[9px]">
                  <ReportTable />
                  <div className="absolute inset-x-0 top-[24px] h-[4px] bg-[repeating-linear-gradient(90deg,#949cad_0_2px,transparent_2px_4px)]" />
                </div>
              </div>
              <div className="flex w-[17px] shrink-0 flex-col items-center">
                <Arrow className="mt-[7px] mb-[6px] rotate-180 text-[#949cad]" />
                <div className="flex flex-1 flex-col">
                  <div className="h-[53%] w-[13px] border border-[#adadad] bg-[#b5b5bd]" />
                </div>
                <Arrow className="my-[7px] text-[#42424a]" />
              </div>
            </div>
            <div className="flex h-[17px] shrink-0 items-center pr-[26px]">
              <Arrow className="mr-[6px] ml-[5px] rotate-90 text-[#949cad]" />
              <div className="flex-1">
                <div className="h-[13px] w-[76%] border border-[#adadad] bg-[#b5b5bd]" />
              </div>
              <Arrow className="-rotate-90 text-[#42424a]" />
            </div>
          </div>
        </div>
      </div>
    </main>
  );
}

function StatusSelect({ label, icon, value, className }: { label: string; icon: ReactNode; value: string; className: string }) {
  return (
    <label className={`relative flex items-center overflow-hidden border-2 border-[#bdc6ce] pl-[7px] ${className}`}>
      {icon}
      <select aria-label={label} className="flex-1 appearance-none pl-[3px] outline-none"><option>{value}</option></select>
      <Arrow className="pointer-events-none absolute top-[5px] right-[3px]" />
    </label>
  );
}

export default function App() {
  return (
    <div className="flex h-screen flex-col overflow-hidden bg-[#efeff8] font-['DejaVu_Sans_Condensed','DejaVu_Sans',Tahoma,sans-serif] text-[11px] text-black">
      <Header />
      <Ribbon />

      <div className="flex min-h-0 flex-1">
        <div className="w-[7px] shrink-0 bg-[linear-gradient(#efeff8_0_2px,#bdc6ce_2px_27px,#94b5de_27px_39px,#84a5d6_39px_57px,#6b94c6_57px_69px,#5a84d6_69px_90px,#4f7bc6_90px_119px,#4273c6_119px_183px,#4f7bc6_183px_221px,#5a84d6_221px_257px,#6b94c6_257px_282px,#84a5d6_282px_322px,#94b5de_322px_349px,#bdc6ce_349px_457px,#efeff8_457px_100%)]" />
        <div className="mt-[2px] flex shrink-0 border-t border-l border-[#949494]">
          <Panel title="Datos" icon={<DatabaseIcon />} className="mt-[13px] mb-[3px] ml-[2px] w-[274px]">
            <div className="my-[2px] mr-px ml-[2px] flex min-h-0 flex-1 flex-col border border-[#bdc6ce]">
              <div className="flex h-[23px] shrink-0 border-b-2 border-[#bdc6ce]">
                <input type="text" aria-label="Buscar campos" placeholder="Buscar campos" className="min-w-0 flex-1 border-r border-[#b5b5bd] pt-px pl-[2px] outline-none placeholder:text-[#84848c]" />
                <button type="button" aria-label="Buscar" className="flex w-[32px] items-center justify-center border border-[#b5b5bd] pt-[2px]"><SearchIcon /></button>
              </div>
              <Tree />
            </div>
          </Panel>
          <Gutter />
          <div className="flex w-[216px] flex-col pr-[7px] pl-px">
            <Panel title="Consulta" icon={<ReportIcon />} className="mt-[16px] flex-[432]" />
            <Panel title="Filtro" icon={<FunnelIcon />} className="mt-[12px] mb-[4px] flex-[179]" />
          </div>
          <Gutter />
        </div>
        <DocumentPane />
      </div>

      <div className="flex h-[25px] shrink-0 items-start">
        <button type="button" aria-label="Ventanas" className="flex h-[25px] w-[39px] items-center gap-[5px] border border-[#bdc6ce] pl-[9px]"><WindowsIcon /><Arrow /></button>
        <button type="button" className="flex h-[24px] items-start gap-[2px] border-t border-r border-[#949494] bg-[linear-gradient(#efeff8_0_2px,#d6dede_2px_8px,#f7efbd_8px_14px,#f7e78c_14px_18px,#f7d652_18px_100%)] pt-[2px] pr-[6px] pl-[8px] text-[#42638c]">
          <DocSmallIcon />
          Documento
        </button>
      </div>

      <footer className="flex h-[21px] shrink-0 border-t-2 border-[#4273c6]">
        <div className="flex min-w-0 flex-1 border-t-[3px] border-[#bdc6ce]">
          <p className="flex-1 pl-[8px] leading-[11px]">Listo</p>
        </div>
        <div className="flex border-l border-[#bdc6ce] pt-px pl-[3px]">
          <StatusSelect label="Informes" icon={<ReportIcon />} value="2 Informes" className="w-[110px]" />
          <StatusSelect label="Salida" icon={<GlobePage size={16} />} value="HTML" className="ml-[12px] w-[136px]" />
          <StatusSelect label="Pestañas" icon={<TabTreeIcon />} value="Pestaña única" className="mr-[8px] ml-[6px] w-[132px]" />
        </div>
      </footer>
    </div>
  );
}
